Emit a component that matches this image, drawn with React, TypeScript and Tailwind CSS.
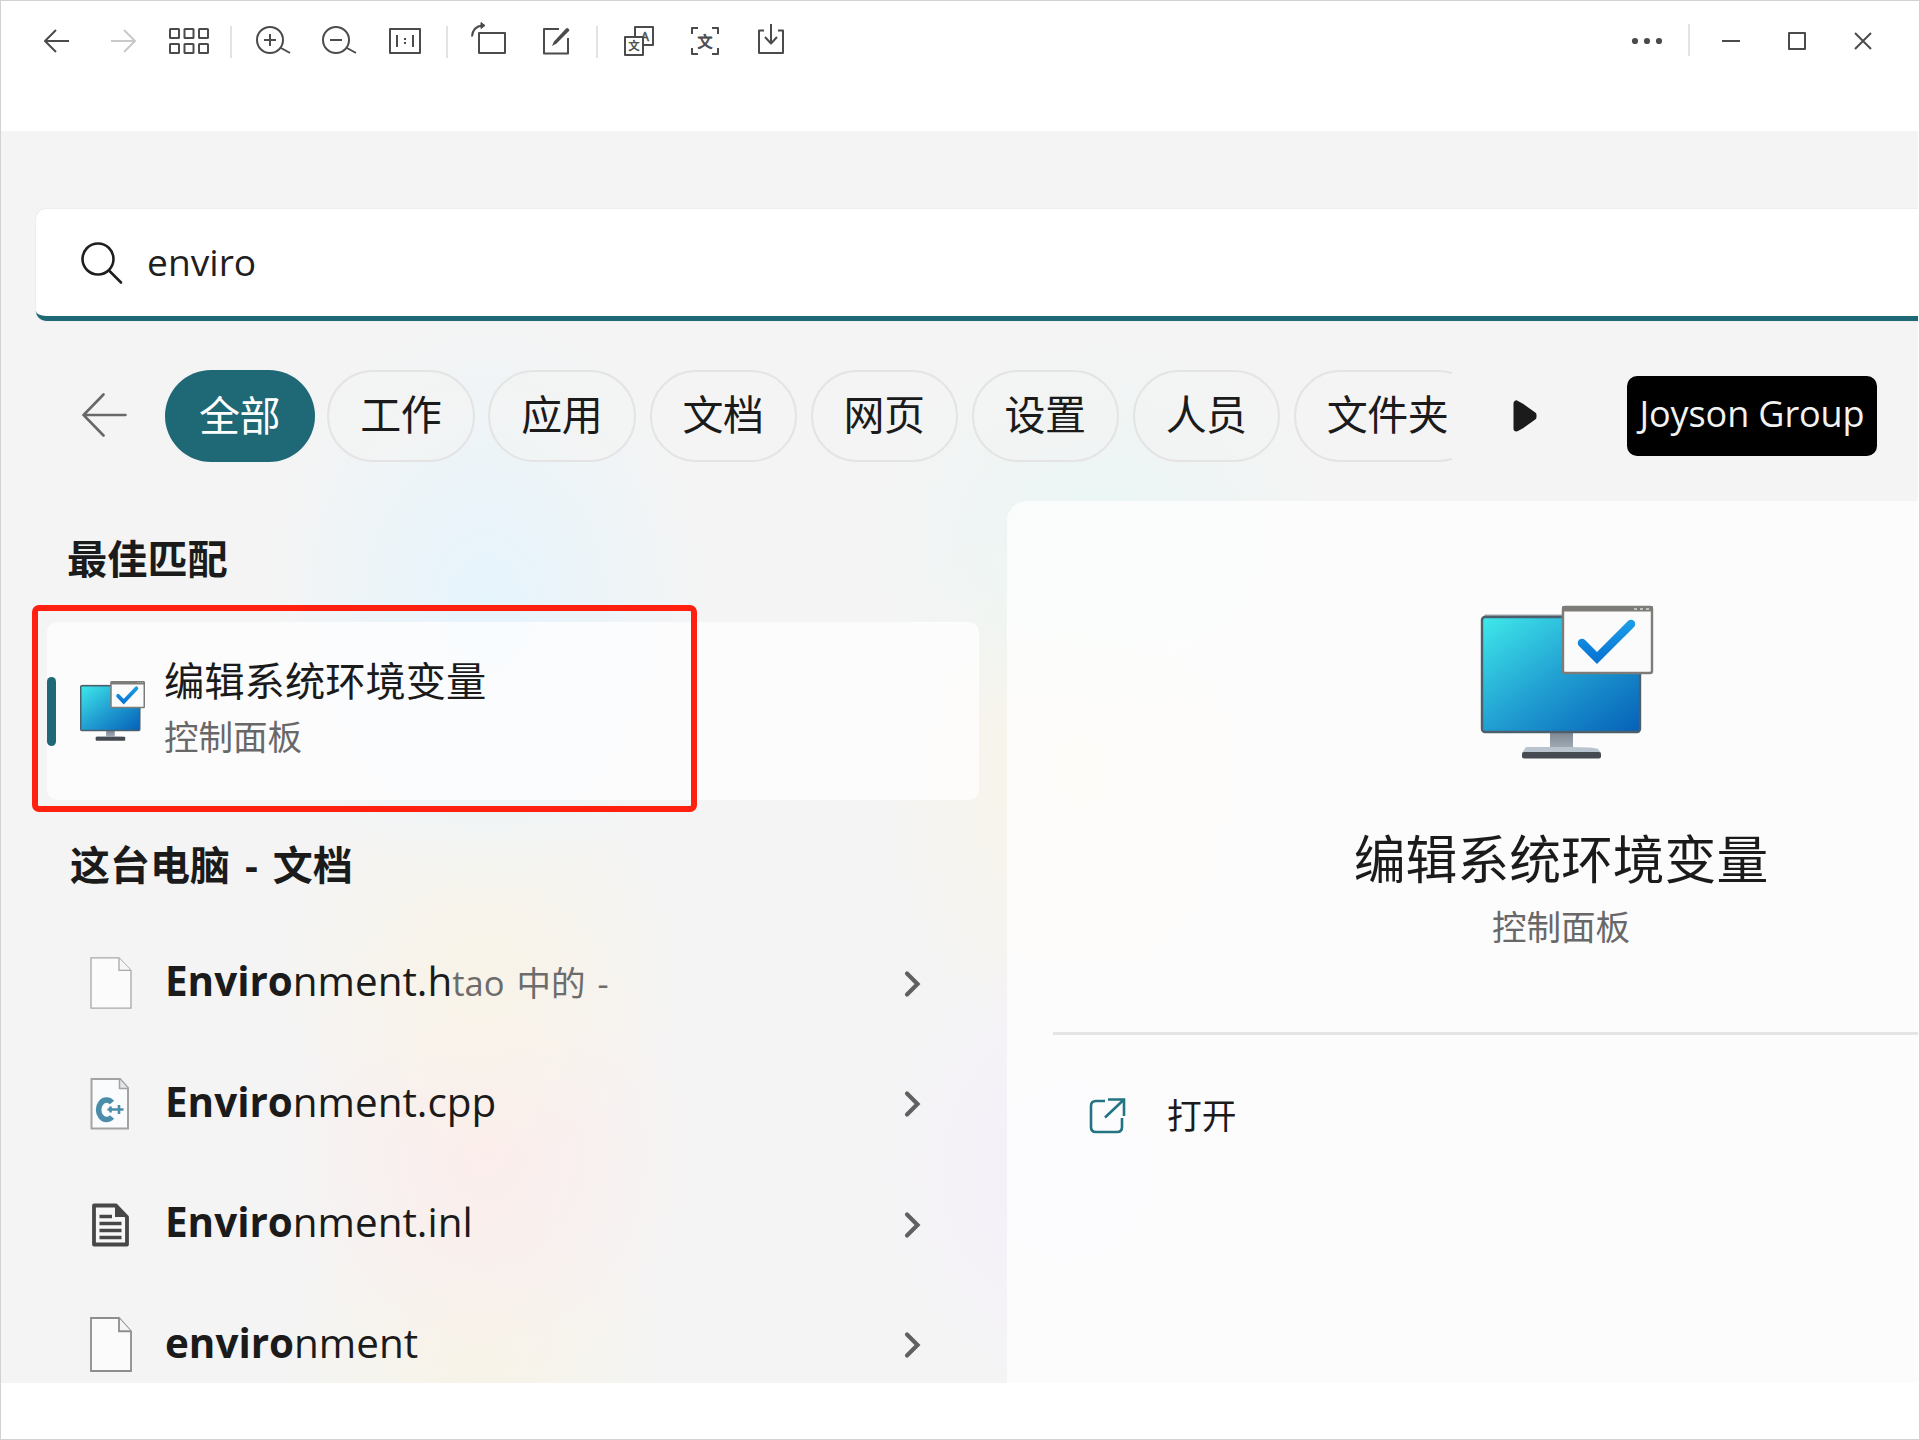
import type { ReactNode } from "react";

function Tool({ children, muted = false }: { children: ReactNode; muted?: boolean }) {
  return (
    <button className={muted ? "h-20 w-[66px] text-[#c9c9c9]" : "h-20 w-[66px] text-[#4b4b4b]"}>
      <svg
        viewBox="-33 -40 66 80"
        className="h-20 w-[66px]"
        fill="none"
        stroke="currentColor"
        strokeWidth="2"
        strokeLinejoin="round"
      >
        {children}
      </svg>
    </button>
  );
}

function Divider({ right = false }: { right?: boolean }) {
  return (
    <div className={right ? "flex h-20 w-[18px] justify-center pt-[23px]" : "flex h-20 w-[18px] justify-center pt-[25px]"}>
      <div className="h-8 w-0.5 bg-[#e3e3e3]" />
    </div>
  );
}

const cjkGlyph = { fontFamily: '"Noto Sans CJK SC", sans-serif' };

function Toolbar() {
  return (
    <header className="flex h-[130px] shrink-0 items-start justify-between bg-white pr-[23px] pl-[23px]">
      <div className="flex">
        <Tool>
          <path d="M12 0H-12M-1 -11L-12 0L-1 11" />
        </Tool>
        <Tool muted>
          <path d="M-12 0H12M1 -11L12 0L1 11" />
        </Tool>
        <Tool>
          {[-19, -4.5, 10].map((x) =>
            [-12, 3].map((y) => <rect key={`${x},${y}`} x={x} y={y} width="9" height="9" rx="0.5" />),
          )}
        </Tool>
        <Divider />
        <Tool>
          <circle cx="-3" cy="-1" r="13" />
          <path d="M-9 -1H3M-3 -7V5M8 7L17 12" />
        </Tool>
        <Tool>
          <circle cx="-3" cy="-1" r="13" />
          <path d="M-9 -1H3M8 7L17 12" />
        </Tool>
        <Tool>
          <path d="M-15 -12H15V12H-15ZM-8 -6V6M8 -6V6M0 -3V-1M0 1V3" />
        </Tool>
        <Divider />
        <Tool>
          <rect x="-10" y="-8" width="26" height="20" />
          <path d="M-17 -4.500C-16.500 -11 -12.500 -15 -6.500 -15.500" />
          <path d="M-8 -18.500L-4 -15.500L-8 -12.500Z" strokeWidth="1" fill="currentColor" />
        </Tool>
        <Tool>
          <path d="M4 -12H-11V12.500H13V-3" />
          <path d="M13 -13L11 -12.500L-1 0.500L-3 5L1.500 2.500L14.500 -10.500Z" fill="currentColor" stroke="none" />
        </Tool>
        <Divider />
        <Tool>
          <rect x="-4" y="-14" width="18" height="18" />
          <text x="2" y="-0.500" fontSize="12.500" fill="currentColor" strokeWidth="0.6" style={{ fontFamily: '"Open Sans", sans-serif' }}>A</text>
          <rect x="-14" y="-4" width="18" height="18" fill="white" />
          <text x="-10.500" y="9" fontSize="11" fill="currentColor" strokeWidth="0.6" style={cjkGlyph}>文</text>
        </Tool>
        <Tool>
          <path d="M-13 -7V-13H-7M7 -13H13V-7M13 7V13H7M-7 13H-13V7" />
          <text x="-7.500" y="5.500" fontSize="15" fill="currentColor" strokeWidth="0.8" style={cjkGlyph}>文</text>
        </Tool>
        <Tool>
          <path d="M-7 -10.500H-12V12H12V-10.500H7M0 -17V2M-6 -4L0 2.500L6 -4" />
        </Tool>
      </div>
      <div className="flex">
        <Tool>
          <g fill="currentColor" stroke="none">
            <circle cx="-12" cy="0" r="3.100" />
            <circle cx="0" cy="0" r="3.100" />
            <circle cx="12" cy="0" r="3.100" />
          </g>
        </Tool>
        <Divider right />
        <Tool>
          <path d="M-9 0H9" />
        </Tool>
        <Tool>
          <rect x="-8" y="-8" width="16" height="16" />
        </Tool>
        <Tool>
          <path d="M-8 -8L8 8M8 -8L-8 8" />
        </Tool>
      </div>
    </header>
  );
}

function Monitor({ className, id, small = false }: { className: string; id: string; small?: boolean }) {
  const edge = small ? 4 : 2.4;
  return (
    <svg viewBox="0 0 174 154" className={className} preserveAspectRatio="none">
      <defs>
        <linearGradient id={`${id}-screen`} x1="0" y1="0" x2="1" y2="1">
          <stop offset="0" stopColor="#3fe9ea" />
          <stop offset="0.5" stopColor="#219fd2" />
          <stop offset="1" stopColor="#0560b8" />
        </linearGradient>
        <linearGradient id={`${id}-stand`} x1="0" y1="0" x2="0" y2="1">
          <stop offset="0" stopColor="#7d8792" />
          <stop offset="1" stopColor="#a3adb8" />
        </linearGradient>
        <linearGradient id={`${id}-tick`} x1="0" y1="0" x2="0" y2="1">
          <stop offset="0" stopColor="#1b9be6" />
          <stop offset="1" stopColor="#0876d4" />
        </linearGradient>
      </defs>
      <rect x="70" y="127" width="23" height="17" fill={`url(#${id}-stand)`} />
      <path d="M46 142H89Q114 142 118 144L121 148H42Z" fill="#b9c4cf" />
      <rect x="42" y={small ? 143 : 147} width="79" height={small ? 10.5 : 6.5} rx="2" fill="#454b51" />
      <path d="M5 9.500H160V14H2Z" fill="#a0a8b0" />
      <rect x="2" y="12" width="158" height="115" rx="3" fill={`url(#${id}-screen)`} stroke="#4b5f6c" strokeWidth={edge} />
      <rect x="83" y="2" width="89" height="66" rx="2" fill="#fbfbfb" stroke="#7e7c78" strokeWidth={edge} />
      <rect x="82" y="1" width="91" height={small ? 8 : 5.5} rx="1" fill="#7e7c78" />
      <path d="M154 4H157M160 4H163M166 4H169" stroke="#d9d9d9" strokeWidth="1.500" />
      <path d="M102 38L117 53L151 19" fill="none" stroke={`url(#${id}-tick)`} strokeWidth={small ? 10 : 8.5} strokeLinecap="round" strokeLinejoin="miter" />
    </svg>
  );
}

function BlankFile({ strong = false }: { strong?: boolean }) {
  const color = strong ? "#8d8d8d" : "#a8a8a8";
  return (
    <svg viewBox="0 0 42 54" className={strong ? "-mt-0.5 h-[55px] w-[42px]" : "-mt-0.5 h-[52px] w-[42px]"} preserveAspectRatio="none">
      <path d="M1 1H29L41 14V53H1Z" fill="#fbfbfb" stroke={color} strokeWidth={strong ? 1.8 : 1.3} />
      <path d="M29 1V14H41" fill="#f6f6f6" stroke={color} strokeWidth={strong ? 1.8 : 1.3} />
    </svg>
  );
}

function CppFile() {
  return (
    <svg viewBox="0 0 40 52" className="h-[52px] w-10">
      <path d="M1.500 1H30L38 10V50.500H1.500Z" fill="#f9fbfc" stroke="#a3a3a3" strokeWidth="2" />
      <path d="M29.500 1V10.500H38" fill="#e5e5e5" stroke="#a3a3a3" strokeWidth="1.500" />
      <path d="M22 24.500A8 9.800 0 1 0 22 39" fill="none" stroke="#4a8dab" strokeWidth="5.600" />
      <path d="M17.500 31.500H33.500M20.500 28.500V34.500M29 27V36" stroke="#4a8dab" strokeWidth="2.600" />
    </svg>
  );
}

function TextFile() {
  return (
    <svg viewBox="0 0 40 44" className="h-11 w-10">
      <path d="M4 2.500H26L37 14V41.500H4Z" fill="#f7f7f7" stroke="#474747" strokeWidth="3.800" strokeLinejoin="round" />
      <path d="M25 2L38 14H25Z" fill="#474747" />
      <path d="M9.500 13.500H22M9.500 20.500H31.500M9.500 27.500H31.500M9.500 34.500H31.500" stroke="#474747" strokeWidth="3.400" />
    </svg>
  );
}

const filters = ["工作", "应用", "文档", "网页", "设置", "人员"];

function Filters() {
  return (
    <div className="mt-[49px] flex h-[92px] shrink-0 items-center">
      <svg viewBox="0 0 46 44" className="mr-[38px] mb-0.5 ml-[80px] h-11 w-[46px]" fill="none" stroke="#686868" strokeWidth="2.600" strokeLinecap="round">
        <path d="M2.500 22H44.500M22.500 1.500L2.500 22L22.500 42.500" />
      </svg>
      <div className="flex h-[92px] w-[1287px] gap-[13.400px] overflow-hidden text-[41px] leading-[85px] tracking-[-0.500px] text-[#1b1b1b]">
        <div className="mr-[-1px] h-[92px] w-[150px] shrink-0 rounded-[46px] bg-[#1f6876] pr-px text-center leading-[90px] text-white">全部</div>
        {filters.map((label) => (
          <div key={label} className="h-[92px] w-[147.700px] shrink-0 rounded-[46px] border-[2.500px] border-[#e4e4e4] bg-[#f4f4f4]/60 pr-px text-center">
            {label}
          </div>
        ))}
        <div className="h-[92px] w-[190px] shrink-0 rounded-[46px] border-[2.500px] border-[#e4e4e4] bg-[#f4f4f4]/60 pl-[31px]">文件夹</div>
      </div>
      <svg viewBox="0 0 24 32" className="ml-[61px] h-8 w-6" fill="#1b1b1b" stroke="#1b1b1b" strokeWidth="6" strokeLinejoin="round">
        <path d="M3.500 3.500V28.500L8 26L20.500 17V15L8 6Z" />
      </svg>
      <div className="ml-[90px] h-20 w-[250px] rounded-[10px] bg-black text-center text-[36px] leading-[75px] tracking-[-0.100px] whitespace-nowrap text-[#f2f2f2]">
        Joyson Group
      </div>
    </div>
  );
}

interface Entry {
  match: string;
  rest: string;
  note?: string;
  icon: ReactNode;
}

const entries: Entry[] = [
  { match: "Enviro", rest: "nment.h", note: "tao 中的 -", icon: <BlankFile /> },
  { match: "Enviro", rest: "nment.cpp", icon: <CppFile /> },
  { match: "Enviro", rest: "nment.inl", icon: <TextFile /> },
  { match: "enviro", rest: "nment", icon: <BlankFile strong /> },
];

function ResultRow({ match, rest, note, icon }: Entry) {
  return (
    <div className="flex h-[120.330px] shrink-0 items-center pl-[89px]">
      <div className="flex w-[75px] shrink-0 items-center">{icon}</div>
      <div className="grow pb-[5px] text-[40.400px] leading-[56px] whitespace-nowrap text-[#1b1b1b]">
        <span className="font-bold">{match}</span>
        <span>{rest}</span>
        {note && <span className="text-[34.500px] [word-spacing:3px] text-[#6c6c6c]">{note}</span>}
      </div>
      <svg viewBox="0 0 20 28" className="mr-[84px] h-7 w-5" fill="none" stroke="#606060" strokeWidth="4.200" strokeLinecap="round" strokeLinejoin="miter">
        <path d="M4 3.500L14.500 14L4 24.500" />
      </svg>
    </div>
  );
}

function Results() {
  return (
    <section className="flex w-[1006px] shrink-0 flex-col overflow-hidden pt-[37px]">
      <h2 className="ml-[66px] h-10 shrink-0 text-[40.200px] leading-[41px] font-bold text-[#1b1b1b]">最佳匹配</h2>
      <div className="relative mt-[44px] ml-[46px] flex h-[178px] w-[932px] shrink-0 items-center rounded-[10px] bg-white/75">
        <div className="h-[69px] w-[9px] rounded-full bg-[#1f6876]" />
        <Monitor id="small" small className="ml-6 h-[60px] w-[65px]" />
        <div className="ml-[19px] flex flex-col pb-1">
          <div className="text-[40.300px] leading-[54px] text-[#1b1b1b]">编辑系统环境变量</div>
          <div className="mt-0.5 text-[34.500px] leading-[54px] text-[#686868]">控制面板</div>
        </div>
        <div className="pointer-events-none absolute -top-[17px] -left-[15px] h-[207px] w-[665px] rounded-[7px] border-[6px] border-[#ff2010]" />
      </div>
      <h2 className="mt-[45px] ml-[69px] h-10 shrink-0 text-[40px] leading-10 font-bold [word-spacing:4.500px] text-[#1b1b1b]">这台电脑 - 文档</h2>
      <div className="mt-[39px] flex flex-col">
        {entries.map((entry) => (
          <ResultRow key={entry.match + entry.rest} {...entry} />
        ))}
      </div>
    </section>
  );
}

function Details() {
  return (
    <section className="flex grow flex-col rounded-tl-[20px] bg-white/75 pt-[104px]">
      <div className="flex flex-col items-center pl-[193px]">
        <Monitor id="large" className="ml-[15px] h-[154px] w-[174px]" />
        <h1 className="mt-[65px] pl-1 text-[51.800px] leading-[70px] text-[#1b1b1b]">编辑系统环境变量</h1>
        <div className="mt-2 pl-1 text-[34.500px] leading-[50px] text-[#686868]">控制面板</div>
      </div>
      <div className="mt-[80px] ml-[46px] h-[3px] bg-[#e6e5e4]" />
      <button className="mt-[57px] flex h-12 items-center pl-[81px] text-[#1b1b1b]">
        <svg viewBox="0 0 38 38" className="h-[38px] w-[38px]" fill="none" stroke="#237483" strokeWidth="2.600">
          <path d="M17 4H8Q3 4 3 9V30Q3 35 8 35H29Q34 35 34 30V21M20 2.500H36V19M36 2.500L17 20.500" />
        </svg>
        <span className="ml-[41px] text-[34.800px] leading-[48px]">打开</span>
      </button>
    </section>
  );
}

export default function App() {
  return (
    <div className="flex h-[1440px] w-[1920px] flex-col border border-[#d2d2d2] bg-white font-['Open_Sans','Noto_Sans_CJK_SC',sans-serif]">
      <Toolbar />
      <main className="flex h-[1252px] w-[1917px] shrink-0 flex-col overflow-hidden bg-[#f4f4f4] bg-[radial-gradient(ellipse_220px_290px_at_485px_475px,#e6f4fc_0%,#e8f4fbb0_45%,transparent_100%),radial-gradient(ellipse_200px_190px_at_480px_840px,#f9f4e8_0%,transparent_100%),radial-gradient(ellipse_220px_260px_at_485px_1020px,#fbedeb_0%,transparent_100%),radial-gradient(ellipse_190px_170px_at_475px_1230px,#f7f4e7_0%,transparent_100%),radial-gradient(ellipse_230px_200px_at_1100px_410px,#e9f6f4_0%,transparent_100%),radial-gradient(ellipse_200px_280px_at_1080px_640px,#faf4e7_0%,transparent_100%),radial-gradient(ellipse_210px_240px_at_1070px_1040px,#f4effb_0%,transparent_100%)]">
        <div className="mt-[78px] ml-[35px] flex h-28 shrink-0 items-center overflow-hidden rounded-l-[10px] border-b-[5.500px] border-[#1f6876] bg-white pl-[45px] shadow-[0_0_2px_#ddd]">
          <svg viewBox="0 0 44 44" className="-mb-[3px] h-11 w-11" fill="none" stroke="#1f1f1f" strokeWidth="2.600" strokeLinecap="round">
            <circle cx="17" cy="17" r="15.500" />
            <path d="M28 28.500L40 40.500" />
          </svg>
          <span className="ml-[22px] pb-0.5 text-[37.200px] leading-[56px] text-[#1f1f1f]">enviro</span>
        </div>
        <Filters />
        <div className="mt-[39px] flex min-h-0 grow">
          <Results />
          <Details />
        </div>
      </main>
    </div>
  );
}
